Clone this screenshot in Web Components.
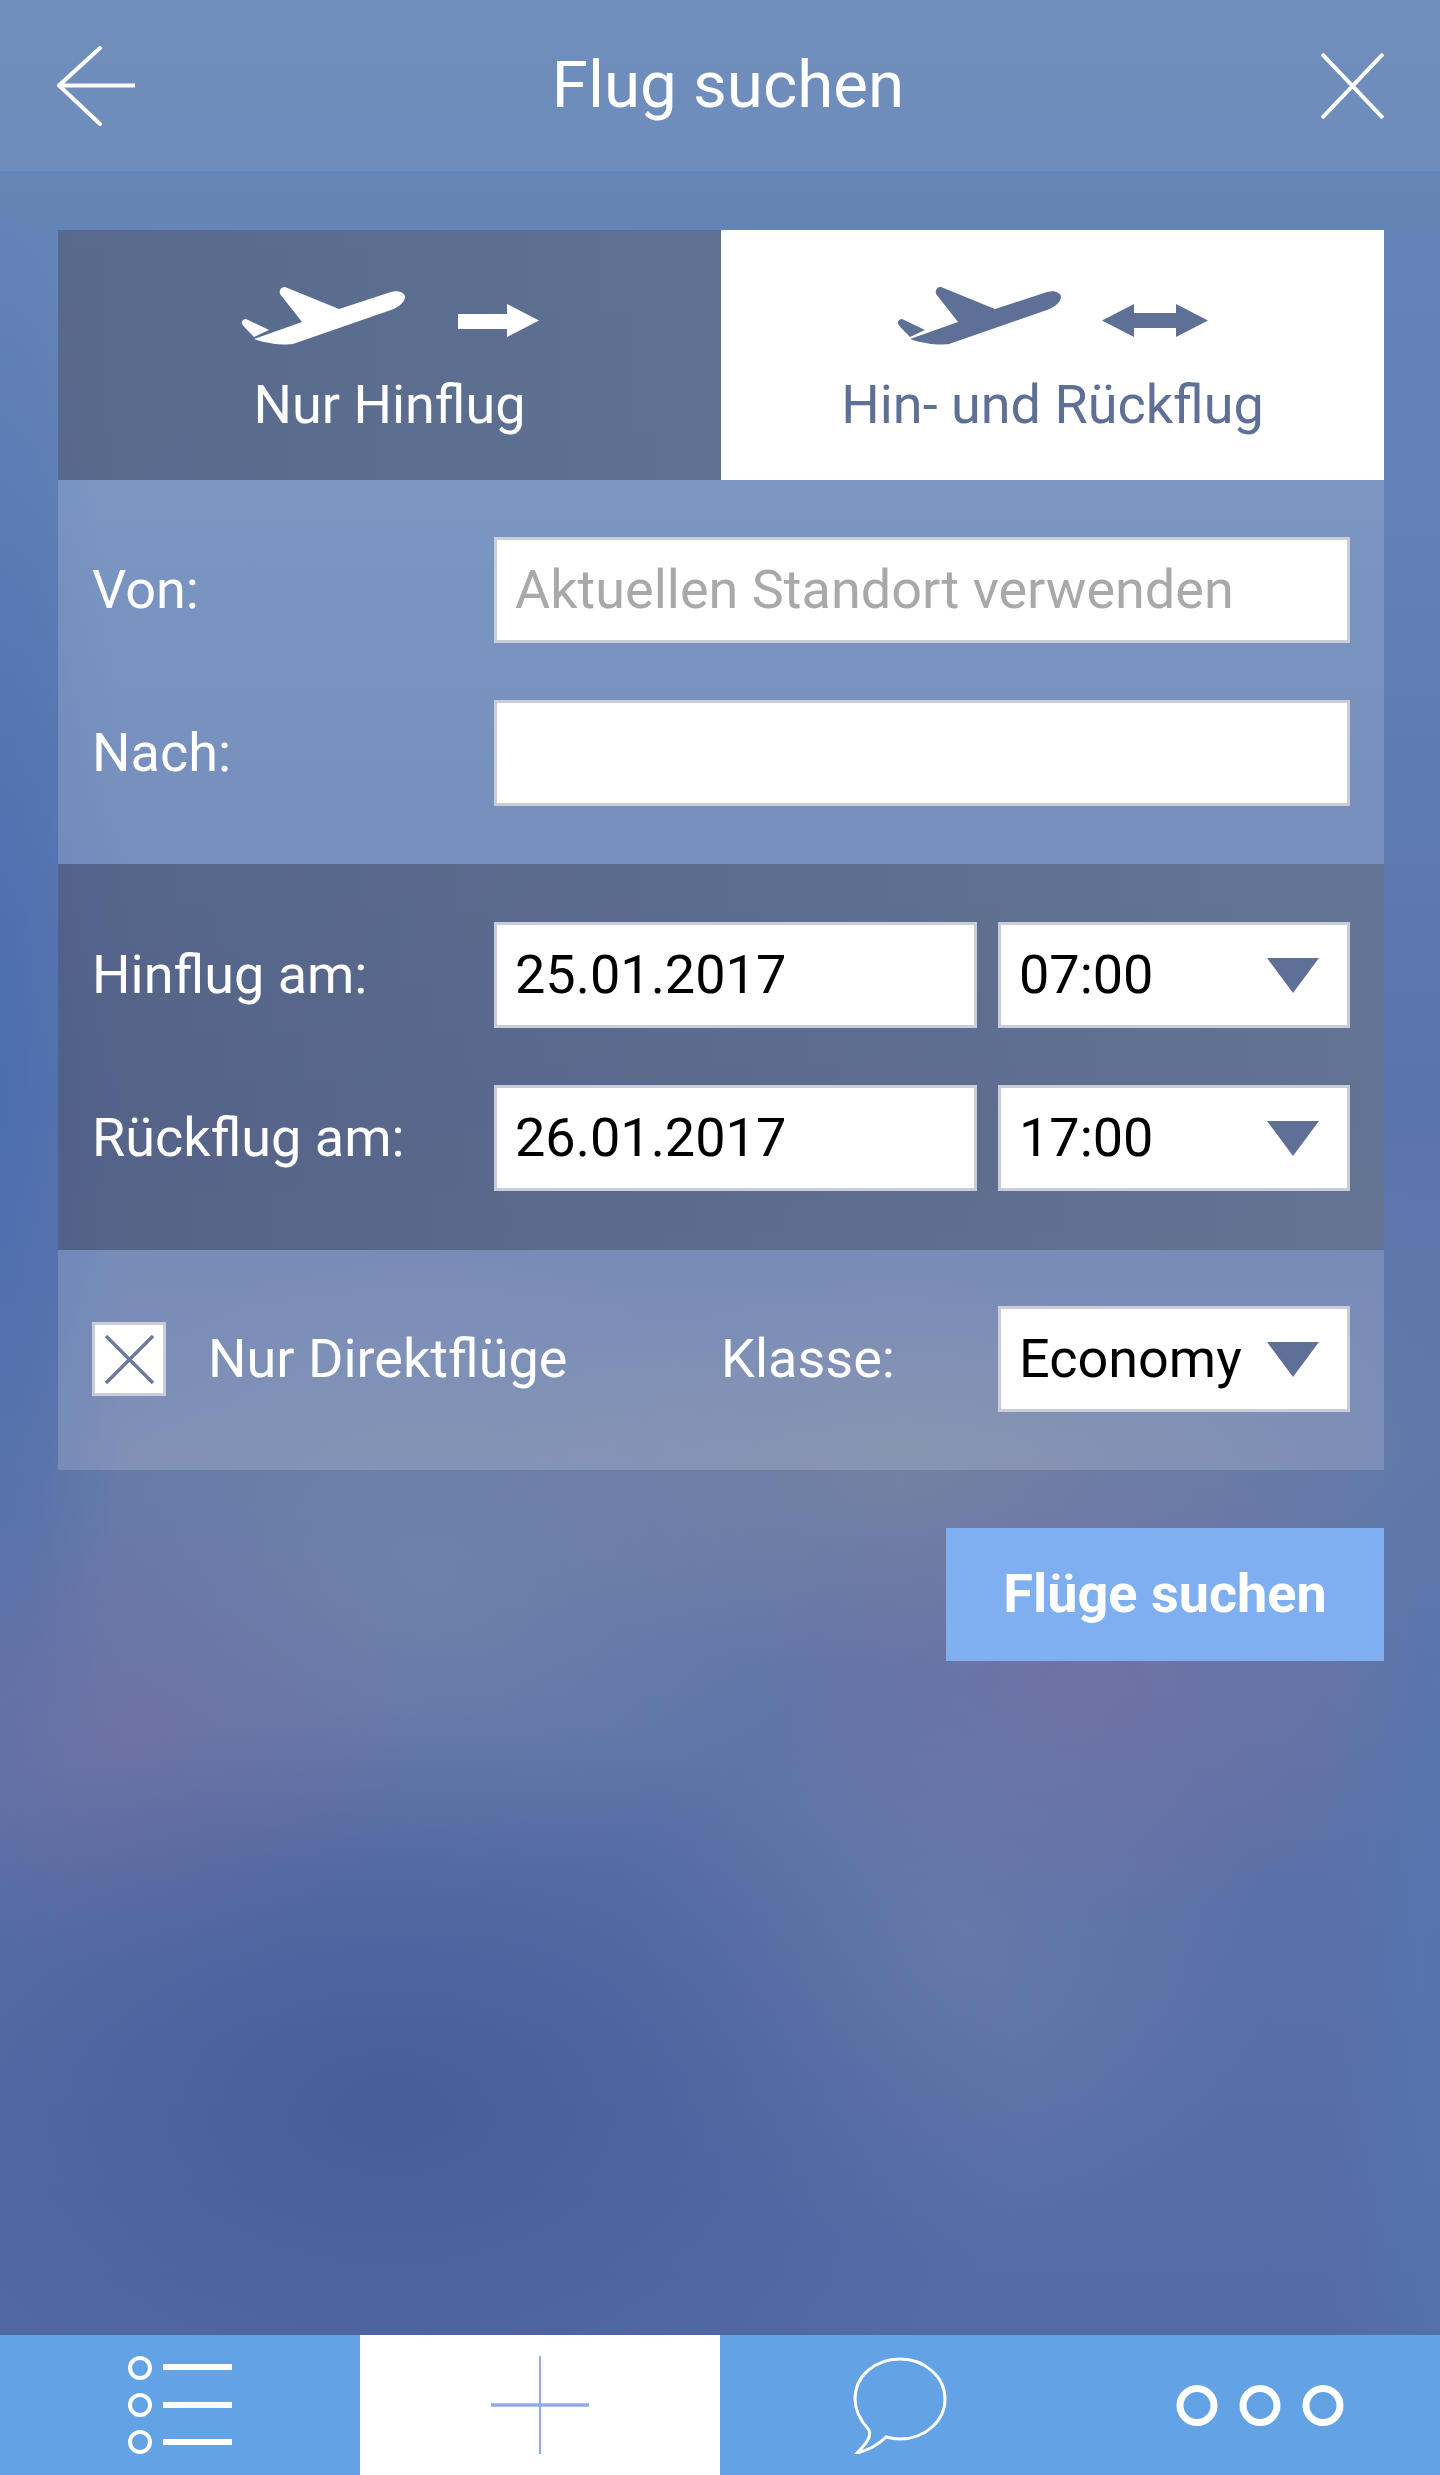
<!DOCTYPE html>
<html lang="de">
<head>
<meta charset="utf-8">
<title>Flug suchen</title>
<style>
html,body{margin:0;padding:0;}
body{font-family:Roboto,"Liberation Sans",sans-serif;}
</style>
</head>
<body>

<flight-screen>
    <top-bar slot="top" title-text="Flug suchen"></top-bar>

    <trip-tabs>
        <trip-tab selected-state="off" arrow="one" label="Nur Hinflug"></trip-tab>
        <trip-tab selected-state="on" arrow="both" label="Hin- und Rückflug"></trip-tab>
    </trip-tabs>

    <form-band tone="light" pad="57px 34px 58px">
        <form-row label="Von:"><text-box placeholder="Aktuellen Standort verwenden"></text-box></form-row>
        <form-row label="Nach:"><text-box></text-box></form-row>
    </form-band>

    <form-band tone="dark" pad="58px 34px 59px">
        <form-row label="Hinflug am:"><text-box value="25.01.2017"></text-box><select-box value="07:00"></select-box></form-row>
        <form-row label="Rückflug am:"><text-box value="26.01.2017"></text-box><select-box value="17:00"></select-box></form-row>
    </form-band>

    <form-band tone="light" pad="56px 34px 58px">
        <options-row></options-row>
    </form-band>

    <search-button>Flüge suchen</search-button>

    <bottom-nav slot="bottom"></bottom-nav>
</flight-screen>

<script>
function planeSvg(color){
    return `<svg width="164" height="58" viewBox="0 0 164 58" style="display:block">
        <path fill="${color}" d="M1 37 C0 35 2 32 5 32 L28 43 L13 50 C9 46 4 41 1 37 Z"/>
        <path fill="${color}" d="M13 52 L61 35 L39 7 C38 3 40 0 44 0 L98 22 L150 5 C158 3 164 6 164 10 C164 16 155 22 147 24 L52 57 C45 58 30 58 13 52 Z"/>
    </svg>`;
}

class FlightScreen extends HTMLElement{
    constructor(){
        super();
        this.attachShadow({mode:"open"}).innerHTML=/*html*/`
        <style>
            :host{
                display:flex; flex-direction:column;
                width:1440px; height:2475px; overflow:hidden;
                background-color:#566fa9;
                background-image:
                    radial-gradient(ellipse 640px 400px at 390px 2110px, rgba(68,90,152,.85), transparent),
                    radial-gradient(ellipse 330px 300px at 940px 1960px, rgba(112,128,170,.55), transparent),
                    radial-gradient(ellipse 300px 240px at 130px 1740px, rgba(124,112,160,.5), transparent),
                    radial-gradient(ellipse 340px 240px at 1090px 1690px, rgba(122,112,162,.6), transparent),
                    radial-gradient(ellipse 400px 320px at 430px 1570px, rgba(118,136,172,.6), transparent),
                    radial-gradient(ellipse 420px 200px at 900px 1480px, rgba(124,134,160,.6), transparent),
                    radial-gradient(ellipse 120px 900px at 1440px 2000px, rgba(84,118,176,.8), transparent),
                    radial-gradient(ellipse 130px 900px at 0px 1100px, rgba(72,108,176,.8), transparent),
                    linear-gradient(180deg,#6586b7 0,#6282b6 500px,#5a74ad 1100px,#667aa8 1450px,#5a70a8 1900px,#5169a6 2475px);
            }
            #main{flex:1; display:flex; flex-direction:column; padding:59px 56px 0 58px; min-height:0;}
        </style>
        <slot name="top"></slot>
        <div id="main"><slot></slot></div>
        <slot name="bottom"></slot>`;
    }
}

class TopBar extends HTMLElement{
    constructor(){
        super();
        this.attachShadow({mode:"open"}).innerHTML=/*html*/`
        <style>
            :host{
                display:flex; align-items:center; justify-content:space-between;
                height:171px; padding:0 56px 0 57px; box-sizing:border-box;
                background:rgba(255,255,255,.07);
            }
            h1{
                margin:0; font:400 65.5px/1 Roboto,sans-serif; color:#fff;
                position:relative; top:-1px;
            }
            svg{display:block; fill:none; stroke:#fff; stroke-width:4;}
        </style>
        <svg width="78" height="80" viewBox="0 0 78 80"><path stroke-linecap="round" d="M43 2 L2 39.5 L43 78 M2 39.5 H78"/></svg>
        <h1>${this.getAttribute("title-text")}</h1>
        <svg width="63" height="66" viewBox="0 0 63 66"><path d="M1 1 L62 65 M62 1 L1 65"/></svg>`;
    }
}

class TripTabs extends HTMLElement{
    constructor(){
        super();
        this.attachShadow({mode:"open"}).innerHTML=/*html*/`
        <style>
            :host{display:grid; grid-template-columns:663px 663px; height:250px; width:1326px;}
        </style>
        <slot></slot>`;
    }
}

class TripTab extends HTMLElement{
    constructor(){
        super();
        const on=this.getAttribute("selected-state")=="on";
        const both=this.getAttribute("arrow")=="both";
        const color=on?"#5f7096":"#fff";
        const arrow=both
            ?`<svg width="106" height="33" viewBox="0 0 106 33" style="display:block"><path fill="${color}" d="M0 16.5 L32 0 V9 H74 V0 L106 16.5 L74 33 V24 H32 V33 Z"/></svg>`
            :`<svg width="81" height="33" viewBox="0 0 81 33" style="display:block"><path fill="${color}" d="M0 10 H49 V0 L81 16.5 L49 33 V25 H0 Z"/></svg>`;
        this.attachShadow({mode:"open"}).innerHTML=/*html*/`
        <style>
            :host{
                display:flex; flex-direction:column; align-items:center;
                background:${on?"#fff":"linear-gradient(90deg,rgba(80,88,112,.6),rgba(92,102,124,.6))"};
                color:${color};
            }
            #icons{display:flex; align-items:center; gap:${both?41:53}px; margin-top:57px; height:58px;}
            #arrow{position:relative; top:4px;}
            #label{font:400 54px/1 Roboto,sans-serif; margin-top:33px;}
        </style>
        <div id="icons">${planeSvg(color)}<div id="arrow">${arrow}</div></div>
        <div id="label">${this.getAttribute("label")}</div>`;
    }
}

class FormBand extends HTMLElement{
    constructor(){
        super();
        const dark=this.getAttribute("tone")=="dark";
        this.attachShadow({mode:"open"}).innerHTML=/*html*/`
        <style>
            :host{
                display:flex; flex-direction:column; gap:57px;
                padding:${this.getAttribute("pad")};
                background:${dark?"linear-gradient(90deg,rgba(80,86,112,.6),rgba(104,114,130,.6))":"rgba(255,255,255,.16)"};
                color:#fff;
            }
        </style>
        <slot></slot>`;
    }
}

class FormRow extends HTMLElement{
    constructor(){
        super();
        this.attachShadow({mode:"open"}).innerHTML=/*html*/`
        <style>
            :host{display:grid; grid-template-columns:402px 1fr; align-items:center; height:106px;}
            #label{font:400 54px/1 Roboto,sans-serif;}
            #fields{display:flex; gap:21px;}
            ::slotted(text-box){flex:1;}
        </style>
        <div id="label">${this.getAttribute("label")}</div>
        <div id="fields"><slot></slot></div>`;
    }
}

const box_style=`
    display:flex; align-items:center; box-sizing:border-box; height:106px;
    background:#fff; border:3px solid #c8cdd8; padding:0 18px;
    font:400 54px/1 Roboto,sans-serif;`;

class TextBox extends HTMLElement{
    constructor(){
        super();
        const value=this.getAttribute("value")||"";
        const placeholder=this.getAttribute("placeholder")||"";
        this.attachShadow({mode:"open"}).innerHTML=/*html*/`
        <style>
            :host{${box_style} color:${value?"#000":"#a9a9a9"}; min-width:0;}
        </style>
        <span>${value||placeholder}</span>`;
    }
}

class SelectBox extends HTMLElement{
    constructor(){
        super();
        this.attachShadow({mode:"open"}).innerHTML=/*html*/`
        <style>
            :host{${box_style} width:352px; flex:none; justify-content:space-between; color:#000; padding-right:28px;}
            svg{display:block; flex:none;}
        </style>
        <span>${this.getAttribute("value")}</span>
        <svg width="52" height="35" viewBox="0 0 52 35"><path fill="#5f7096" d="M0 0 H52 L26 35 Z"/></svg>`;
    }
}

class OptionsRow extends HTMLElement{
    constructor(){
        super();
        this.attachShadow({mode:"open"}).innerHTML=/*html*/`
        <style>
            :host{display:flex; align-items:center; height:106px; font:400 54px/1 Roboto,sans-serif; color:#fff;}
            #check{
                width:74px; height:74px; box-sizing:border-box; flex:none;
                background:#fff; border:3px solid #c8cdd8;
                display:flex; align-items:center; justify-content:center;
            }
            #direct{margin-left:42px; width:513px;}
            select-box{margin-left:auto;}
            svg{display:block;}
        </style>
        <div id="check">
            <svg width="49" height="49" viewBox="0 0 49 49" fill="none" stroke="#6e7a9c" stroke-width="3.5"><path d="M1 1 L48 48 M48 1 L1 48"/></svg>
        </div>
        <span id="direct">Nur Direktflüge</span>
        <span id="klasse">Klasse:</span>
        <select-box value="Economy"></select-box>`;
    }
}

class SearchButton extends HTMLElement{
    constructor(){
        super();
        this.attachShadow({mode:"open"}).innerHTML=/*html*/`
        <style>
            :host{
                display:flex; align-items:center; justify-content:center;
                align-self:flex-end; box-sizing:border-box;
                width:438px; height:133px; margin-top:58px; padding-bottom:2px;
                background:#7fafef; color:#fff;
                font:700 54px/1 Roboto,sans-serif;
            }
        </style>
        <slot></slot>`;
    }
}

class BottomNav extends HTMLElement{
    constructor(){
        super();
        this.attachShadow({mode:"open"}).innerHTML=/*html*/`
        <style>
            :host{display:grid; grid-template-columns:repeat(4,1fr); height:140px; background:#63a2e4;}
            div{display:flex; align-items:center; justify-content:center;}
            #add{background:#fff;}
            svg{display:block; fill:none;}
        </style>
        <div>
            <svg width="104" height="98" viewBox="0 0 104 98" stroke="#fff">
                <circle cx="12" cy="12" r="10" stroke-width="4"/><circle cx="12" cy="49" r="10" stroke-width="4"/><circle cx="12" cy="86" r="10" stroke-width="4"/>
                <path stroke-width="6" d="M35 11 H104 M35 49 H104 M35 86 H104"/>
            </svg>
        </div>
        <div id="add">
            <svg width="98" height="98" viewBox="0 0 98 98" stroke="#8fabea"><path stroke-width="2" d="M49 0 V98"/><path stroke-width="3.5" d="M0 49 H98"/></svg>
        </div>
        <div>
            <svg width="94" height="97" viewBox="0 0 94 97" stroke="#fff" stroke-width="3">
                <path d="M16 73 C6 62 2 52 2 42 C2 19 22 2 47 2 C72 2 92 20 92 42 C92 64 72 82 47 82 C42 82 37 81 33 80 C27 86 16 93 4 96 C12 88 19 80 16 73 Z"/>
            </svg>
        </div>
        <div>
            <svg width="168" height="41" viewBox="0 0 168 41" stroke="#fff" stroke-width="7">
                <circle cx="21" cy="20.5" r="17"/><circle cx="84" cy="20.5" r="17"/><circle cx="147" cy="20.5" r="17"/>
            </svg>
        </div>`;
    }
}

customElements.define("flight-screen",FlightScreen);
customElements.define("top-bar",TopBar);
customElements.define("trip-tabs",TripTabs);
customElements.define("trip-tab",TripTab);
customElements.define("form-band",FormBand);
customElements.define("form-row",FormRow);
customElements.define("text-box",TextBox);
customElements.define("select-box",SelectBox);
customElements.define("options-row",OptionsRow);
customElements.define("search-button",SearchButton);
customElements.define("bottom-nav",BottomNav);
</script>
</body>
</html>
